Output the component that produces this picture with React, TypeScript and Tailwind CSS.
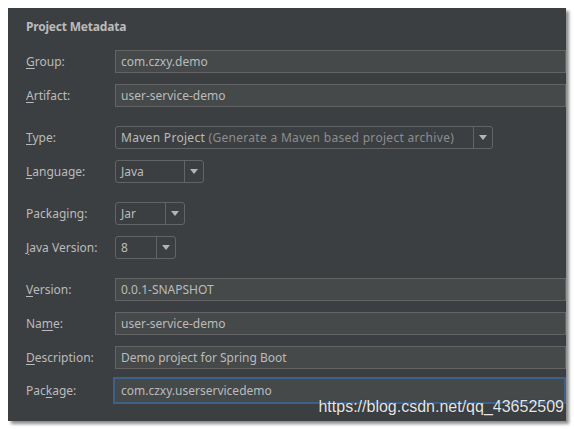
import React from 'react';

type FieldProps = { label: React.ReactNode; value: string; mt: string; focused?: boolean };

function Label({ children }: { children: React.ReactNode }) {
  return <div className="w-[89px] shrink-0 text-[12px] text-[#bbbbbb]">{children}</div>;
}

function Mn({ c }: { c: string }) {
  return <span className="underline underline-offset-2 decoration-1">{c}</span>;
}

function TextField({ label, value, mt, focused }: FieldProps) {
  return (
    <div className={`flex items-center ${mt}`}>
      <Label>{label}</Label>
      {focused ? (
        <div className="-ml-[2px] h-[27px] w-[500px] border-2 border-[#3e6287] bg-[#45494a] pl-[6px] text-[12px] leading-[23px] text-[#bbbbbb]">
          {value}
        </div>
      ) : (
        <div className="h-[23px] w-[500px] border border-[#646464] bg-[#45494a] pl-[5px] text-[12px] leading-[21px] text-[#bbbbbb]">
          {value}
        </div>
      )}
    </div>
  );
}

function Arrow() {
  return (
    <svg width="8" height="5" viewBox="0 0 8 5">
      <path d="M0 0 H8 L4 5 Z" fill="#b4b4b4" />
    </svg>
  );
}

function Combo({ label, children, width, mt }: { label: React.ReactNode; children: React.ReactNode; width: string; mt: string }) {
  return (
    <div className={`flex items-center ${mt}`}>
      <Label>{label}</Label>
      <div className={`flex h-[23px] ${width} rounded-[3px] border border-[#646464]`}>
        <div className="flex-1 pl-[5px] text-[12px] leading-[21px] text-[#bbbbbb] whitespace-nowrap">{children}</div>
        <div className="flex w-[19px] items-center justify-center border-l border-[#646464]">
          <Arrow />
        </div>
      </div>
    </div>
  );
}

export default function App() {
  return (
    <div className="relative h-[429px] w-[574px] bg-white" style={{ fontFamily: '"Noto Sans", "Open Sans", sans-serif' }}>
      <div className="absolute left-[8px] top-[8px] h-[413px] w-[558px] overflow-hidden bg-[#3c3f41] shadow-[3px_3px_3px_rgba(0,0,0,0.45)]">
        <div className="pl-[18px] pt-[10px]">
          <div className="h-[18px] text-[12px] font-bold leading-[18px] tracking-[-0.2px] text-[#bbbbbb]">Project Metadata</div>

          <TextField mt="mt-[14px]" label={<><Mn c="G" />roup:</>} value="com.czxy.demo" />
          <TextField mt="mt-[11px]" label={<><Mn c="A" />rtifact:</>} value="user-service-demo" />

          <Combo mt="mt-[19px]" width="w-[378px]" label={<><Mn c="T" />ype:</>}>
            <span className="tracking-[0.3px]">
              Maven Project <span className="text-[#8d8d8d]">(Generate a Maven based project archive)</span>
            </span>
          </Combo>
          <Combo mt="mt-[11px]" width="w-[89px]" label={<><Mn c="L" />anguage:</>}>
            Java
          </Combo>

          <Combo mt="mt-[19px]" width="w-[70px]" label={<>Packa<Mn c="g" />ing:</>}>
            Jar
          </Combo>
          <Combo mt="mt-[11px]" width="w-[61px]" label={<><Mn c="J" />ava Version:</>}>
            8
          </Combo>

          <TextField mt="mt-[19px]" label={<><Mn c="V" />ersion:</>} value="0.0.1-SNAPSHOT" />
          <TextField mt="mt-[11px]" label={<>Na<Mn c="m" />e:</>} value="user-service-demo" />
          <TextField mt="mt-[11px]" label={<><Mn c="D" />escription:</>} value="Demo project for Spring Boot" />
          <TextField mt="mt-[8px]" label={<>Pac<Mn c="k" />age:</>} value="com.czxy.userservicedemo" focused />
        </div>
      </div>
      <div
        className="absolute right-[10px] top-[397px] text-[16px] leading-[20px] text-[#e6e6e6]"
        style={{ fontFamily: '"Liberation Sans", Arial, sans-serif', textShadow: '0 0 1px rgba(0,0,0,0.5)' }}
      >
        https://blog.csdn.net/qq_43652509
      </div>
    </div>
  );
}
